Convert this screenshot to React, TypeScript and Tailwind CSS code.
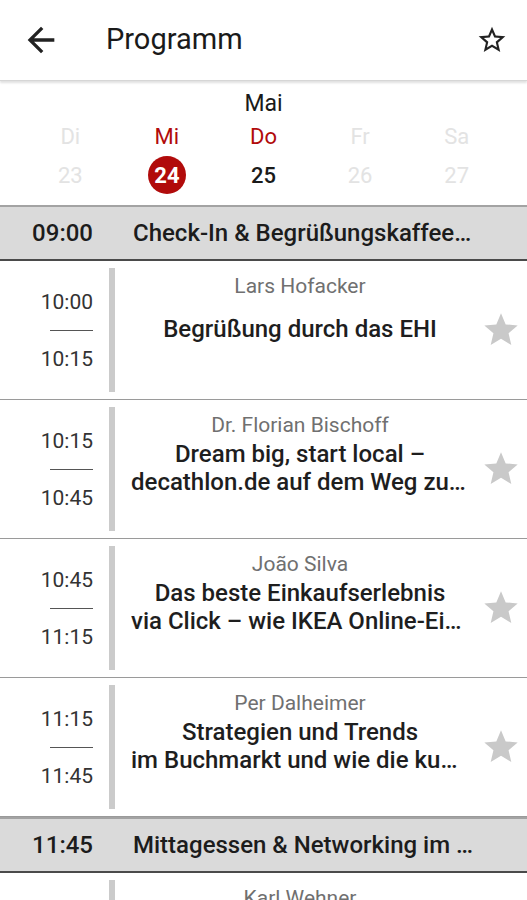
import { useState } from 'react';

type Session = { kind: 'talk'; start: string; end: string; speaker: string; lines: string[] } | { kind: 'break'; time: string; title: string };

const DAYS = [
    { name: 'Di', num: '23', active: false },
    { name: 'Mi', num: '24', active: true, selected: true },
    { name: 'Do', num: '25', active: true },
    { name: 'Fr', num: '26', active: false },
    { name: 'Sa', num: '27', active: false },
];

// titles are broken into lines like the app does it, the last one gets cut with an ellipsis
const SESSIONS: Session[] = [
    { kind: 'break', time: '09:00', title: 'Check-In & Begrüßungskaffee in der Ausstellung' },
    { kind: 'talk', start: '10:00', end: '10:15', speaker: 'Lars Hofacker', lines: ['Begrüßung durch das EHI'] },
    { kind: 'talk', start: '10:15', end: '10:45', speaker: 'Dr. Florian Bischoff', lines: ['Dream big, start local –', 'decathlon.de auf dem Weg zum Omnichannel-Händler'] },
    { kind: 'talk', start: '10:45', end: '11:15', speaker: 'João Silva', lines: ['Das beste Einkaufserlebnis', 'via Click – wie IKEA Online-Einkauf neu denkt'] },
    { kind: 'talk', start: '11:15', end: '11:45', speaker: 'Per Dalheimer', lines: ['Strategien und Trends', 'im Buchmarkt und wie die kunden sie erleben'] },
    { kind: 'break', time: '11:45', title: 'Mittagessen & Networking im Ausstellungsbereich' },
    { kind: 'talk', start: '13:00', end: '13:30', speaker: 'Karl Wehner', lines: ['Personalisierung im Handel'] },
];

const STAR_FILLED = 'M12 17.27L18.18 21l-1.64-7.03L22 9.24l-7.19-.61L12 2 9.19 8.63 2 9.24l5.46 4.73L5.82 21z';
const STAR_OUTLINE =
    'M22 9.24l-7.19-.62L12 2 9.19 8.63 2 9.24l5.46 4.73L5.82 21 12 17.27 18.18 21l-1.63-7.03L22 9.24zM12 15.4l-3.76 2.27 1-4.28-3.32-2.88 4.38-.38L12 6.1l1.71 4.04 4.38.38-3.32 2.88 1 4.28L12 15.4z';

function Icon({ d, size, className }: { d: string; size: number; className?: string }) {
    return (
        <svg width={size} height={size} viewBox="0 0 24 24" className={className} fill="currentColor">
            <path d={d} />
        </svg>
    );
}

function BreakRow({ time, title }: { time: string; title: string }) {
    return (
        <div className="flex h-[56px] items-center border-t-2 border-b-2 border-t-[#a3a3a3] border-b-[#4a4a4a] bg-[#dadada] text-[24px] font-medium text-[#1c1c1c]">
            <div className="w-[109px] shrink-0 pr-4 text-right">{time}</div>
            <div className="min-w-0 flex-1 truncate pl-6 pr-[52px]">{title}</div>
        </div>
    );
}

function TalkRow({ s }: { s: Extract<Session, { kind: 'talk' }> }) {
    const [fav, setFav] = useState(false);
    return (
        <div className="flex h-[139px] border-b border-[#9a9a9a] py-[7px]">
            <div className="flex w-[109px] shrink-0 flex-col items-end justify-center pr-4 text-[21px] leading-[24px] text-[#333]">
                <span>{s.start}</span>
                <span className="my-4 h-px w-[43px] bg-[#555]" />
                <span>{s.end}</span>
            </div>
            <div className="w-[6px] shrink-0 bg-[#cbcbcb]" />
            <div className="min-w-0 flex-1 pt-[6px] pr-[12px] pl-[16px] text-center">
                <div className="truncate text-[21px] leading-[24px] text-[#707070]">{s.speaker}</div>
                <div className="mt-[3px] flex min-h-[56px] flex-col justify-center text-[24px] font-medium leading-[28px] text-[#1e1e1e]">
                    {s.lines.map((l) => (
                        <div
                            key={l}
                            className="truncate"
                        >
                            {l}
                        </div>
                    ))}
                </div>
            </div>
            <button
                onClick={() => setFav(!fav)}
                className="flex w-[46px] shrink-0 items-center"
            >
                <Icon d={STAR_FILLED} size={40} className={fav ? 'text-[#b40000]' : 'text-[#c9c9c9]'} />
            </button>
        </div>
    );
}

export default function App() {
    return (
        <div className="h-[900px] w-full overflow-hidden bg-white font-['Roboto',sans-serif]">
            <header className="relative z-10 flex h-[81px] items-center border-b border-[#d6d6d6] bg-white shadow-[0_2px_2px_rgba(0,0,0,0.12)]">
                <button className="ml-[21px] flex h-10 w-10 items-center justify-center text-[#222]">
                    <Icon d="M20 11H7.83l5.59-5.59L12 4l-8 8 8 8 1.41-1.41L7.83 13H20v-2z" size={40} />
                </button>
                <h1 className="ml-[45px] flex-1 text-[29px] text-[#1a1a1a]">Programm</h1>
                <button className="mr-[19px] text-[#222]">
                    <Icon d={STAR_OUTLINE} size={32} />
                </button>
            </header>

            <section className="px-[22px] pt-[11px] pb-[11px]">
                <div className="text-center text-[23px] leading-[24px] text-[#1a1a1a]">Mai</div>
                <div className="mt-[6px] grid grid-cols-5">
                    {DAYS.map((d) => (
                        <div
                            key={d.name}
                            className={'text-center text-[22px] leading-[30px] ' + (d.active ? 'text-[#b10b0b]' : 'text-[#e3e3e3]')}
                        >
                            {d.name}
                        </div>
                    ))}
                </div>
                <div className="mt-[4px] grid grid-cols-5">
                    {DAYS.map((d) => (
                        <div
                            key={d.num}
                            className="flex justify-center"
                        >
                            <span
                                className={
                                    'flex h-[38px] w-[38px] items-center justify-center rounded-full text-[22px] ' +
                                    (d.selected ? 'bg-[#b10b0b] font-bold text-white' : d.active ? 'font-medium text-[#1a1a1a]' : 'text-[#e3e3e3]')
                                }
                            >
                                {d.num}
                            </span>
                        </div>
                    ))}
                </div>
            </section>

            <main>
                {SESSIONS.map((s, i) =>
                    s.kind === 'break' ? (
                        <BreakRow
                            key={i}
                            time={s.time}
                            title={s.title}
                        />
                    ) : (
                        <TalkRow
                            key={i}
                            s={s}
                        />
                    ),
                )}
            </main>
        </div>
    );
}
